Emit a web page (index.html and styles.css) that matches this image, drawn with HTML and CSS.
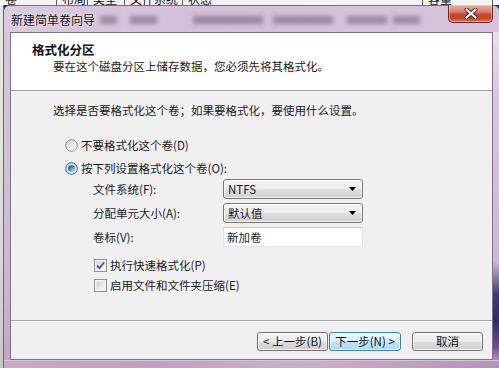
FILE: index.html
```html
<!DOCTYPE html>
<html lang="zh-CN">
<head>
<meta charset="utf-8">
<title>新建简单卷向导</title>
<link rel="stylesheet" href="styles.css">
</head>
<body>
<div class="screen">
  <div class="bgtop">
    <span class="col" style="width:57px">卷</span>
    <span class="col" style="width:31px">布局</span>
    <span class="col" style="width:37px">类型</span>
    <span class="col" style="width:58px">文件系统</span>
    <span class="col" style="width:240px">状态</span>
    <span class="col" style="width:70px">容量</span>
  </div>
  <div class="row">
    <div class="bgleft"></div>
    <div class="dialog">
      <div class="titlebar">
        <span class="title">新建简单卷向导</span>
        <div class="blurs">
          <i style="margin-left:5px;width:17px"></i>
          <i style="margin-left:13px;width:27px"></i>
          <i style="margin-left:36px;width:70px"></i>
          <i style="margin-left:10px;width:60px"></i>
          <i style="margin-left:14px;width:40px"></i>
          <i style="margin-left:6px;width:27px"></i>
        </div>
        <div class="close">
          <svg width="14" height="11" viewBox="0 0 14 11">
            <path d="M2.5 1.5 L11.5 9.5 M11.5 1.5 L2.5 9.5" stroke="#4a2020" stroke-width="4" stroke-linecap="round"/>
            <path d="M2.5 1.5 L11.5 9.5 M11.5 1.5 L2.5 9.5" stroke="#ffffff" stroke-width="2.2" stroke-linecap="round"/>
          </svg>
        </div>
      </div>
      <div class="mid">
        <div class="fl"></div>
        <div class="client">
          <div class="header">
            <div class="h-title">格式化分区</div>
            <div class="h-sub">要在这个磁盘分区上储存数据，您必须先将其格式化。</div>
          </div>
          <div class="content">
            <div class="intro">选择是否要格式化这个卷；如果要格式化，要使用什么设置。</div>
            <div class="radios">
              <div class="opt">
                <svg class="radio" width="13" height="13" viewBox="0 0 13 13">
                  <defs><linearGradient id="r1" x1="0" y1="0" x2="1" y2="1"><stop offset="0" stop-color="#d4d4d4"/><stop offset="1" stop-color="#fdfdfd"/></linearGradient></defs>
                  <circle cx="6.5" cy="6.5" r="5.8" fill="url(#r1)" stroke="#8b8c8c"/>
                </svg>
                <span class="lbl">不要格式化这个卷(D)</span>
              </div>
              <div class="opt">
                <svg class="radio" width="13" height="13" viewBox="0 0 13 13">
                  <defs>
                    <linearGradient id="r2" x1="0" y1="0" x2="1" y2="1"><stop offset="0" stop-color="#d4d4d4"/><stop offset="1" stop-color="#fdfdfd"/></linearGradient>
                    <radialGradient id="d2" cx="0.65" cy="0.7" r="0.7"><stop offset="0" stop-color="#9be0f7"/><stop offset="0.6" stop-color="#2d8bbd"/><stop offset="1" stop-color="#145273"/></radialGradient>
                  </defs>
                  <circle cx="6.5" cy="6.5" r="5.8" fill="url(#r2)" stroke="#2c628b"/>
                  <circle cx="6.5" cy="6.5" r="3.3" fill="url(#d2)"/>
                </svg>
                <span class="lbl">按下列设置格式化这个卷(O):</span>
              </div>
            </div>
            <div class="settings">
              <span class="slbl">文件系统(F):</span>
              <div class="combo"><span>NTFS</span><svg width="7" height="4" viewBox="0 0 7 4"><polygon points="0,0 7,0 3.5,4" fill="#000"/></svg></div>
              <span class="slbl">分配单元大小(A):</span>
              <div class="combo"><span>默认值</span><svg width="7" height="4" viewBox="0 0 7 4"><polygon points="0,0 7,0 3.5,4" fill="#000"/></svg></div>
              <span class="slbl">卷标(V):</span>
              <div class="textbox">新加卷</div>
            </div>
            <div class="checks">
              <div class="opt">
                <svg class="cb" width="13" height="13" viewBox="0 0 13 13">
                  <defs><linearGradient id="c1" x1="0" y1="0" x2="1" y2="1"><stop offset="0" stop-color="#cfcfcf"/><stop offset="1" stop-color="#fbfbfb"/></linearGradient></defs>
                  <rect x="0.5" y="0.5" width="12" height="12" fill="#f4f4f4" stroke="#8e8f8f"/>
                  <rect x="2.5" y="2.5" width="8" height="8" fill="url(#c1)"/>
                  <path d="M3 6.6 L5.4 9.2 L10.2 3.2" fill="none" stroke="#3d5497" stroke-width="1.8"/>
                </svg>
                <span class="lbl">执行快速格式化(P)</span>
              </div>
              <div class="opt">
                <svg class="cb" width="13" height="13" viewBox="0 0 13 13">
                  <defs><linearGradient id="c2" x1="0" y1="0" x2="1" y2="1"><stop offset="0" stop-color="#cfcfcf"/><stop offset="1" stop-color="#fbfbfb"/></linearGradient></defs>
                  <rect x="0.5" y="0.5" width="12" height="12" fill="#f4f4f4" stroke="#8e8f8f"/>
                  <rect x="2.5" y="2.5" width="8" height="8" fill="url(#c2)"/>
                </svg>
                <span class="lbl">启用文件和文件夹压缩(E)</span>
              </div>
            </div>
          </div>
          <div class="buttons">
            <button class="btn back">&lt; 上一步(B)</button>
            <button class="btn next">下一步(N) &gt;</button>
            <button class="btn cancel">取消</button>
          </div>
        </div>
        <div class="fr"></div>
      </div>
      <div class="fb"></div>
    </div>
  </div>
</div>
</body>
</html>
```

FILE: styles.css
```css
* { box-sizing: border-box; }
html, body { margin: 0; padding: 0; }
body {
  width: 499px;
  height: 368px;
  overflow: hidden;
  background: #2c2a66;
  font-family: "Noto Sans CJK SC", "DejaVu Sans", sans-serif;
  color: #1a1a1a;
}
.screen { width: 499px; height: 368px; overflow: hidden; }

.bgtop {
  height: 5px;
  overflow: hidden;
  background: #f3f3f3;
  display: flex;
  white-space: nowrap;
}
.bgtop .col {
  flex: none;
  font-size: 12px;
  line-height: 12px;
  margin-top: -7px;
  padding-left: 5px;
  border-right: 1px solid #555;
  height: 12px;
  color: #111;
}

.row { display: flex; height: 363px; }
.bgleft {
  width: 4px;
  flex: none;
  background: linear-gradient(#e4eadf 0, #dfe6da 40%, #d8d8d8 70%, #c8c8c8 100%);
  border-right: 1px solid #6c6470;
}

.dialog {
  width: 495px;
  flex: none;
  display: flex;
  flex-direction: column;
  border-radius: 6px 6px 0 0;
  background: linear-gradient(#ddcfe1, #d0bdd6);
  border-top: 1px solid #7a6c80;
}

.titlebar {
  height: 26px;
  display: flex;
  align-items: flex-start;
  padding-left: 7px;
  background: linear-gradient(90deg, #dacbde 0%, #d3bfd9 40%, #d6c3db 100%);
  border-radius: 6px 6px 0 0;
}
.title {
  font-size: 12px;
  line-height: 14px;
  margin-top: 7px;
  color: #111;
  text-shadow: 0 0 4px #f3ecf5, 0 0 2px #f3ecf5;
  white-space: nowrap;
}
.blurs { display: flex; margin-top: 10px; }
.blurs i {
  display: block;
  height: 8px;
  background: rgba(110, 90, 120, 0.55);
  filter: blur(2px);
}
.close {
  margin-left: auto;
  margin-right: 6px;
  width: 45px;
  height: 18px;
  margin-top: -1px;
  border: 1px solid #5e2b27;
  border-top: none;
  border-radius: 0 0 5px 5px;
  background: linear-gradient(#eab0a2 0%, #dc7e6c 40%, #c84730 55%, #c9462c 80%, #da7a56 100%);
  display: flex;
  align-items: center;
  justify-content: center;
  box-shadow: inset 0 0 0 1px rgba(255, 210, 200, 0.5);
}

.mid { display: flex; height: 328px; }
.fl {
  width: 6px;
  flex: none;
  background: linear-gradient(#d7c7db 0%, #d2bfd7 50%, #cdb3cf 80%, #c4a6c2 100%);
}
.fr {
  width: 6px;
  flex: none;
  background: linear-gradient(#e8e0ea 0%, #d8c8de 20%, #cbb8d6 70%, #43397a 80%, #2c2a66 88%, #6d4f8e 96%, #b58fb8 100%);
}

.client {
  width: 483px;
  flex: none;
  background: #f0f0f0;
  border: 1px solid #7d7284;
  display: flex;
  flex-direction: column;
}
.header {
  height: 58px;
  flex: none;
  background: #ffffff;
  border-bottom: 1px solid #a0a0a0;
  padding: 9px 0 0 21px;
}
.h-title {
  font-size: 12.5px;
  font-weight: bold;
  line-height: 16px;
  color: #111;
}
.h-sub {
  font-size: 11.5px;
  line-height: 14px;
  margin-left: 21px;
  margin-top: 1px;
  color: #1a1a1a;
}

.content {
  height: 229px;
  flex: none;
  padding: 11px 0 0 42px;
  font-size: 11.5px;
}
.intro { line-height: 16px; }

.radios {
  margin-top: 17px;
  margin-left: 12px;
  display: flex;
  flex-direction: column;
  gap: 3px;
}
.opt {
  display: flex;
  align-items: center;
  height: 20px;
  gap: 3px;
}
.radio, .cb { flex: none; display: block; }
.lbl { line-height: 14px; white-space: nowrap; }

.settings {
  margin-top: 1px;
  margin-left: 40px;
  display: grid;
  grid-template-columns: 130px 140px;
  grid-auto-rows: 20px;
  row-gap: 4px;
  align-items: center;
}
.slbl { line-height: 14px; white-space: nowrap; }
.combo {
  height: 20px;
  border: 1px solid #777;
  border-radius: 3px;
  background: linear-gradient(#f4f4f4 0%, #ececec 50%, #dedede 51%, #d2d2d2 100%);
  box-shadow: inset 0 0 0 1px rgba(255, 255, 255, 0.7);
  display: flex;
  align-items: center;
  justify-content: space-between;
  padding: 0 6px 0 4px;
}
.combo span { line-height: 14px; font-size: 11.5px; }
.combo svg { display: block; }
.textbox {
  height: 20px;
  background: #fff;
  border: 1px solid #e1e4e8;
  border-top-color: #c4c7cc;
  padding-left: 3px;
  line-height: 18px;
}

.checks {
  margin-top: 8px;
  margin-left: 41px;
  display: flex;
  flex-direction: column;
}

.buttons {
  flex: 1;
  border-top: 1px solid #a5a5a5;
  box-shadow: inset 0 1px 0 #ffffff;
  display: flex;
  justify-content: flex-end;
  align-items: flex-start;
  padding: 11px 9px 0 0;
}
.btn {
  height: 19px;
  margin: 0;
  padding: 0;
  font-family: "Noto Sans CJK SC", "DejaVu Sans", sans-serif;
  font-size: 11.5px;
  line-height: 15px;
  color: #111;
  border: 1px solid #707070;
  border-radius: 3px;
  background: linear-gradient(#f3f3f3 0%, #ebebeb 50%, #dddddd 51%, #cfcfcf 100%);
  box-shadow: inset 0 0 0 1px rgba(255, 255, 255, 0.75);
  white-space: nowrap;
}
.back { width: 71px; }
.next {
  width: 72px;
  margin-left: 1px;
  border-color: #3c7fb1;
  background: linear-gradient(#e8f5fc 0%, #dbf0fb 50%, #c2e5f8 51%, #acd9f2 100%);
  box-shadow: inset 0 0 0 1px rgba(255, 255, 255, 0.6);
}
.cancel { width: 71px; margin-left: 11px; }

.fb {
  height: 8px;
  background: linear-gradient(90deg, #c9a9c5 0%, #c2a1c0 30%, #cbb0cb 60%, #b594b8 100%);
  border-top: 1px solid #d9c6d9;
}
```
